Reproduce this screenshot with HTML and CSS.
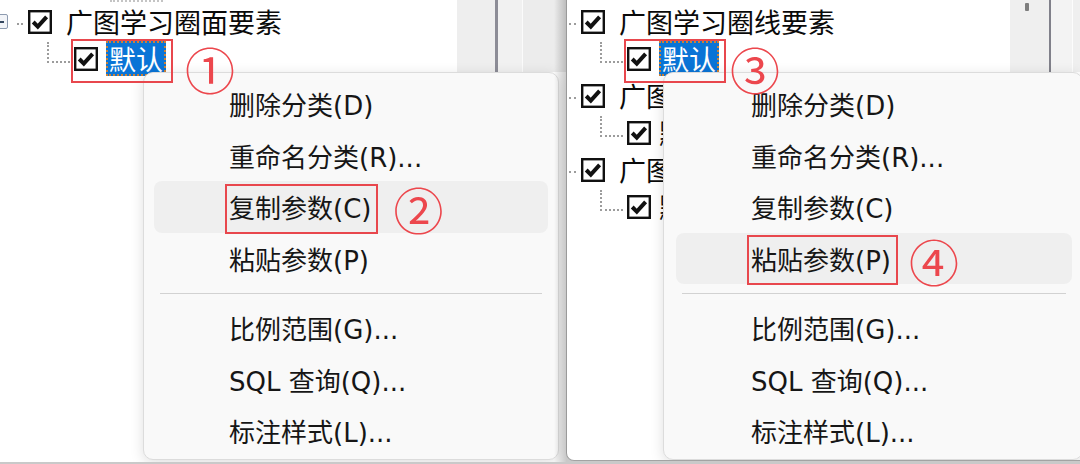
FILE: index.html
```html
<!DOCTYPE html>
<html lang="zh-CN">
<head>
<meta charset="utf-8">
<title>图层分类右键菜单</title>
<link rel="stylesheet" href="styles.css">
</head>
<body>
<div class="stage">
  <section class="panel panel-a">
    <div class="top">
      <ul class="tree">
        <li class="row parent">
          <span class="expander"></span>
          <span class="dots dots-a"></span>
          <svg class="cb" viewBox="0 0 24 24"><rect x="1.2" y="1.2" width="21.6" height="21.6" fill="#fff" stroke="#111" stroke-width="2.4"/><path d="M5.2 12 L9.8 16.6 L18.6 6.8" fill="none" stroke="#111" stroke-width="4"/></svg>
          <span class="label">广图学习圈面要素</span>
        </li>
        <li class="row child child-a">
          <span class="elbow"></span>
          <span class="mark">
            <svg class="cb" viewBox="0 0 24 24"><rect x="1.2" y="1.2" width="21.6" height="21.6" fill="#fff" stroke="#111" stroke-width="2.4"/><path d="M5.2 12 L9.8 16.6 L18.6 6.8" fill="none" stroke="#111" stroke-width="4"/></svg>
            <span class="sel">默认</span>
          </span>
          <span class="num num-tree num-1">①</span>
        </li>
      </ul>
      <div class="sidebar sidebar-a"></div>
    </div>
    <div class="menu menu-a">
      <div class="item"><span class="txt">删除分类(D)</span></div>
      <div class="item"><span class="txt">重命名分类(R)...</span></div>
      <div class="item hover"><span class="txt boxed">复制参数(C)</span><span class="num num-menu num-2">②</span></div>
      <div class="item"><span class="txt">粘贴参数(P)</span></div>
      <div class="sep"></div>
      <div class="item"><span class="txt">比例范围(G)...</span></div>
      <div class="item"><span class="txt">SQL 查询(Q)...</span></div>
      <div class="item"><span class="txt">标注样式(L)...</span></div>
    </div>
  </section>

  <section class="panel panel-b">
    <div class="top">
      <ul class="tree">
        <li class="row parent">
          <span class="dots dots-b"></span>
          <svg class="cb" viewBox="0 0 24 24"><rect x="1.2" y="1.2" width="21.6" height="21.6" fill="#fff" stroke="#111" stroke-width="2.4"/><path d="M5.2 12 L9.8 16.6 L18.6 6.8" fill="none" stroke="#111" stroke-width="4"/></svg>
          <span class="label">广图学习圈线要素</span>
        </li>
        <li class="row child child-b">
          <span class="elbow"></span>
          <span class="mark">
            <svg class="cb" viewBox="0 0 24 24"><rect x="1.2" y="1.2" width="21.6" height="21.6" fill="#fff" stroke="#111" stroke-width="2.4"/><path d="M5.2 12 L9.8 16.6 L18.6 6.8" fill="none" stroke="#111" stroke-width="4"/></svg>
            <span class="sel">默认</span>
          </span>
          <span class="num num-tree num-3">③</span>
        </li>
        <li class="row parent">
          <span class="dots dots-b"></span>
          <svg class="cb" viewBox="0 0 24 24"><rect x="1.2" y="1.2" width="21.6" height="21.6" fill="#fff" stroke="#111" stroke-width="2.4"/><path d="M5.2 12 L9.8 16.6 L18.6 6.8" fill="none" stroke="#111" stroke-width="4"/></svg>
          <span class="label">广图</span>
        </li>
        <li class="row child child-b">
          <span class="elbow"></span>
          <svg class="cb cb-gap" viewBox="0 0 24 24"><rect x="1.2" y="1.2" width="21.6" height="21.6" fill="#fff" stroke="#111" stroke-width="2.4"/><path d="M5.2 12 L9.8 16.6 L18.6 6.8" fill="none" stroke="#111" stroke-width="4"/></svg>
          <span class="label label-child">默认</span>
        </li>
        <li class="row parent">
          <span class="dots dots-b"></span>
          <svg class="cb" viewBox="0 0 24 24"><rect x="1.2" y="1.2" width="21.6" height="21.6" fill="#fff" stroke="#111" stroke-width="2.4"/><path d="M5.2 12 L9.8 16.6 L18.6 6.8" fill="none" stroke="#111" stroke-width="4"/></svg>
          <span class="label">广图</span>
        </li>
        <li class="row child child-b">
          <span class="elbow"></span>
          <svg class="cb cb-gap" viewBox="0 0 24 24"><rect x="1.2" y="1.2" width="21.6" height="21.6" fill="#fff" stroke="#111" stroke-width="2.4"/><path d="M5.2 12 L9.8 16.6 L18.6 6.8" fill="none" stroke="#111" stroke-width="4"/></svg>
          <span class="label label-child">默认</span>
        </li>
      </ul>
      <div class="sidebar sidebar-b"></div>
    </div>
    <div class="menu menu-b">
      <div class="item"><span class="txt">删除分类(D)</span></div>
      <div class="item"><span class="txt">重命名分类(R)...</span></div>
      <div class="item"><span class="txt">复制参数(C)</span></div>
      <div class="item hover"><span class="txt boxed">粘贴参数(P)</span><span class="num num-menu num-4">④</span></div>
      <div class="sep"></div>
      <div class="item"><span class="txt">比例范围(G)...</span></div>
      <div class="item"><span class="txt">SQL 查询(Q)...</span></div>
      <div class="item"><span class="txt">标注样式(L)...</span></div>
    </div>
  </section>
</div>
</body>
</html>
```

FILE: styles.css
```css
* { box-sizing: border-box; }

html, body {
  margin: 0;
  padding: 0;
}

body {
  width: 1080px;
  height: 464px;
  overflow: hidden;
  background: #c9c9c9;
  font-family: "DejaVu Sans", "Noto Sans CJK SC", sans-serif;
  color: #111;
}

.stage {
  display: flex;
  height: 464px;
}

.panel {
  position: relative;
  overflow: hidden;
  background: #fff;
  flex: none;
}

.panel-a {
  width: 566px;
  height: 462px;
}

/* cut-off focus dots at the very top edge */
.panel-a::before {
  content: "";
  position: absolute;
  top: 0;
  left: 110px;
  width: 53px;
  border-top: 2px dotted #c4c4c4;
}

.panel-a::after {
  content: "";
  position: absolute;
  top: 0;
  right: 0;
  bottom: 0;
  width: 12px;
  background: linear-gradient(to right, rgba(0,0,0,0), rgba(0,0,0,0.2));
  z-index: 3;
}

.panel-b {
  width: 514px;
  height: 461px;
  border-left: 1px solid #9a9a9a;
  border-bottom: 1px solid #a3a3a3;
  border-bottom-left-radius: 8px;
}

.top {
  display: flex;
  align-items: flex-start;
  justify-content: space-between;
}

/* ---------- tree ---------- */
.tree {
  list-style: none;
  margin: 0;
  padding: 3px 0 0;
  font-family: "Noto Sans CJK SC", sans-serif;
  font-size: 27px;
  line-height: 1;
  color: #0a0a0a;
}

.row {
  display: flex;
  align-items: center;
  height: 37px;
  white-space: nowrap;
}

.cb {
  flex: none;
  width: 24px;
  height: 24px;
}

.expander {
  flex: none;
  width: 13px;
  height: 15px;
  margin-left: -5px;
  border: 1px solid #8d9bb0;
  border-radius: 2px;
  background: linear-gradient(#34475f, #34475f) 1px 6px / 7px 2px no-repeat, #f2f4f8;
}

.dots {
  flex: none;
  height: 0;
  margin-top: 5px;
  border-top: 2px dotted #9c9c9c;
}

.dots-a {
  width: 6px;
  margin-left: 9px;
  margin-right: 5px;
}

.dots-b {
  width: 7px;
  margin-left: 2px;
  margin-right: 5px;
}

.label {
  margin-left: 14px;
}

.label-child {
  margin-left: 8px;
}

.child-a { padding-left: 47px; }
.child-b { padding-left: 33px; }

.elbow {
  flex: none;
  align-self: flex-start;
  width: 23px;
  height: 21px;
  margin-top: 2px;
  border-left: 2px dotted #9c9c9c;
  border-bottom: 2px dotted #9c9c9c;
}

.cb-gap { margin-left: 4px; }

.mark {
  position: relative;
  display: flex;
  align-items: center;
  align-self: stretch;
  margin-left: 4px;
}

.mark::after {
  content: "";
  position: absolute;
  top: -1px;
  bottom: -6px;
  left: -3px;
  right: -7px;
  border: 2px solid #e8474d;
  z-index: 2;
}

.sel {
  margin-left: 8px;
  height: 35px;
  line-height: 31px;
  padding: 0 1px;
  background: #0a74d6;
  color: #fff;
  border: 2px dotted #c98239;
}

/* ---------- annotations ---------- */
.num {
  position: relative;
  z-index: 2;
  flex: none;
  font-family: "Noto Sans CJK SC", sans-serif;
  font-size: 50px;
  line-height: 40px;
  height: 40px;
  color: #ec474d;
}

.num-tree { margin-top: 19px; }
.num-1 { margin-left: 19px; }
.num-3 { margin-left: 11px; }
.num-menu { margin-top: 3px; }
.num-2 { margin-left: 22px; }
.num-4 { margin-left: 18px; }

/* ---------- gray strips top right ---------- */
.sidebar {
  flex: none;
  position: relative;
  height: 72px;
}

.sidebar-a {
  width: 109px;
  background: linear-gradient(to right,
    #eeeeee 0 38px, #8c8c96 38px 41px, #f1f1f1 41px 65px,
    #fbfbfb 65px 66px, #ececec 66px);
}

.sidebar-b {
  width: 70px;
  background: linear-gradient(to right,
    #efefef 0 39px, #80808a 39px 41px, #f3f3f3 41px 62px,
    #fcfcfc 62px 63px, #efefef 63px);
}

.sidebar-b::before {
  content: "";
  position: absolute;
  left: 15px;
  top: 3px;
  width: 4px;
  height: 8px;
  border-radius: 1px;
  background: #7d7d7d;
}

/* ---------- context menu ---------- */
.menu {
  position: absolute;
  top: 72px;
  height: 388px;
  width: 416px;
  padding: 5px 10px;
  background: #f9f9f9;
  border: 1px solid #dcdcdc;
  border-radius: 10px;
  box-shadow: 0 3px 14px rgba(0, 0, 0, 0.13);
  z-index: 1;
  font-size: 26px;
  color: #161616;
}

.menu-a { left: 143px; }

.menu-b {
  left: 96px;
  width: 420px;
  padding-left: 12px;
}

.item {
  display: flex;
  align-items: center;
  height: 51.5px;
  padding-left: 75px;
  border-radius: 8px;
  white-space: nowrap;
}

.item.hover { background: #efefef; }

.txt { position: relative; }

.boxed::after {
  content: "";
  position: absolute;
  top: 50%;
  left: -4px;
  right: -7px;
  height: 46px;
  margin-top: -23px;
  border: 2px solid #e8474d;
}

.sep {
  height: 1px;
  margin: 9px 6px 8px;
  background: #d2d2d2;
}
```
